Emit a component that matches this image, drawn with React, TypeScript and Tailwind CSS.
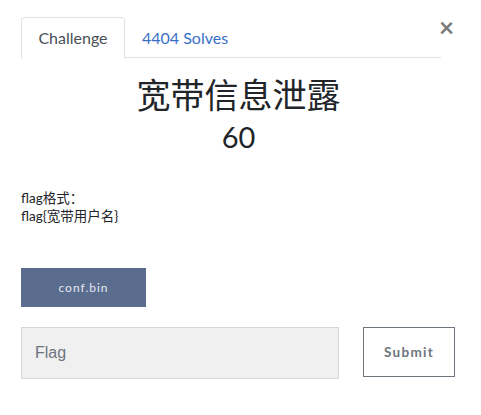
import React, { useState } from 'react';

const lato = { fontFamily: 'Lato, "Noto Sans CJK SC", sans-serif' };

export default function App() {
  const [tab, setTab] = useState<'challenge' | 'solves'>('challenge');
  const [flag, setFlag] = useState('');

  return (
    <div className="relative w-[481px] h-[415px] bg-white text-[#212529]" style={lato}>
      {/* close */}
      <button className="absolute left-[439px] top-[14px] text-[26px] leading-none font-bold text-[#7a7a7a]">
        ×
      </button>

      <div className="pt-[17px] px-[21px]">
        {/* tabs */}
        <div className="flex w-[420px] h-[41px] border-b border-[#dee2e6]">
          <button
            onClick={() => setTab('challenge')}
            className="w-[104px] -mb-px h-[42px] rounded-t-[4px] border border-[#dee2e6] border-b-white bg-white text-[16px] text-[#495057]"
          >
            Challenge
          </button>
          <button
            onClick={() => setTab('solves')}
            className="px-[17px] h-[41px] text-[16px] text-[#3a6fc6]"
          >
            4404 Solves
          </button>
        </div>

        {/* heading */}
        <div className="flex flex-col items-center mt-[15px] pr-[4px]">
          <h2 className="text-[34px] leading-[44px] text-[#212529]">宽带信息泄露</h2>
          <h3 className="text-[29px] leading-[38px] mt-[1px] text-[#212529]">60</h3>
        </div>

        {/* description */}
        <div className="mt-[33px] text-[13.5px] leading-[18px] text-[#212529]">
          <p>flag格式：</p>
          <p>flag{'{'}宽带用户名{'}'}</p>
        </div>

        {/* file */}
        <button className="mt-[43px] w-[125px] h-[39px] bg-[#5b6d8f] text-[12px] tracking-[1px] text-[#e4e8ef]">
          conf.bin
        </button>

        {/* submit row */}
        <div className="flex mt-[20px] items-start">
          <input
            value={flag}
            onChange={(e) => setFlag(e.target.value)}
            placeholder="Flag"
            className="w-[318px] h-[52px] bg-[#f0f0f0] border border-[#d3d6db] px-[13px] text-[16px] text-[#495057] placeholder:text-[#6c757d] outline-none"
            style={{ fontFamily: '"Liberation Sans", Arial, sans-serif' }}
          />
          <button className="ml-[24px] w-[92px] h-[50px] border border-[#6c757d] text-[13.5px] font-bold tracking-[1.3px] text-[#6c757d]">
            Submit
          </button>
        </div>
      </div>
    </div>
  );
}
